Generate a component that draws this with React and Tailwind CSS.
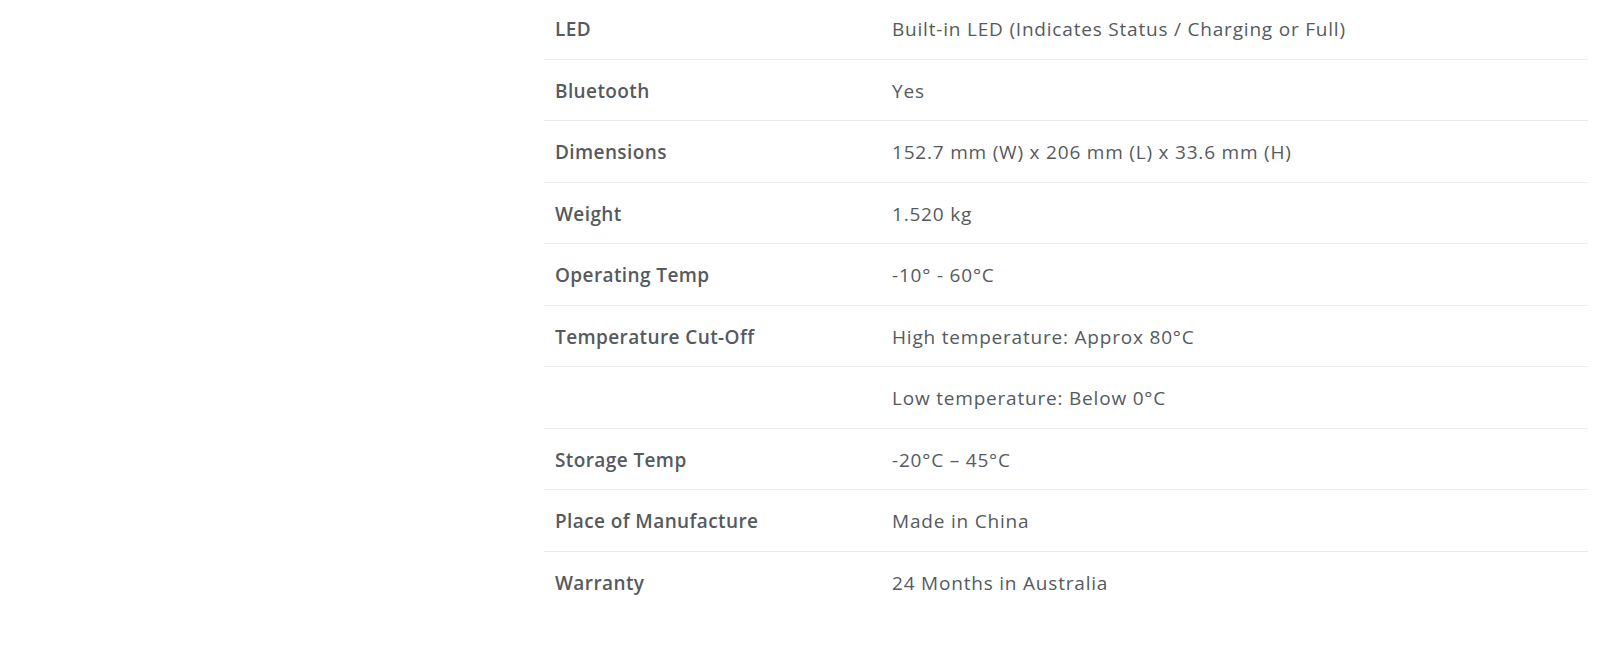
const specs = [
  ["LED", "Built-in LED (Indicates Status / Charging or Full)"],
  ["Bluetooth", "Yes"],
  ["Dimensions", "152.7 mm (W) x 206 mm (L) x 33.6 mm (H)"],
  ["Weight", "1.520 kg"],
  ["Operating Temp", "-10° - 60°C"],
  ["Temperature Cut-Off", "High temperature: Approx 80°C"],
  ["", "Low temperature: Below 0°C"],
  ["Storage Temp", "-20°C – 45°C"],
  ["Place of Manufacture", "Made in China"],
  ["Warranty", "24 Months in Australia"],
];

const App = () => {
  return (
    <div
      className="w-[1600px] h-[651px] bg-white overflow-hidden"
      style={{ fontFamily: "'Open Sans', sans-serif" }}
    >
      <div className="ml-[544px] w-[1044px] -mt-[2px]">
        {specs.map(([label, value], i) => (
          <div
            key={i}
            className={`flex items-center h-[61.5px] pt-[2px] text-[19px] text-[#555a5e] ${
              i < specs.length - 1 ? "border-b border-[#ebebeb]" : ""
            }`}
          >
            <div className="w-[337px] pl-[11px] font-semibold tracking-[0.4px]">
              {label}
            </div>
            <div className="flex-1 pl-[11px] tracking-[0.8px]">{value}</div>
          </div>
        ))}
      </div>
    </div>
  );
};

export default App;
